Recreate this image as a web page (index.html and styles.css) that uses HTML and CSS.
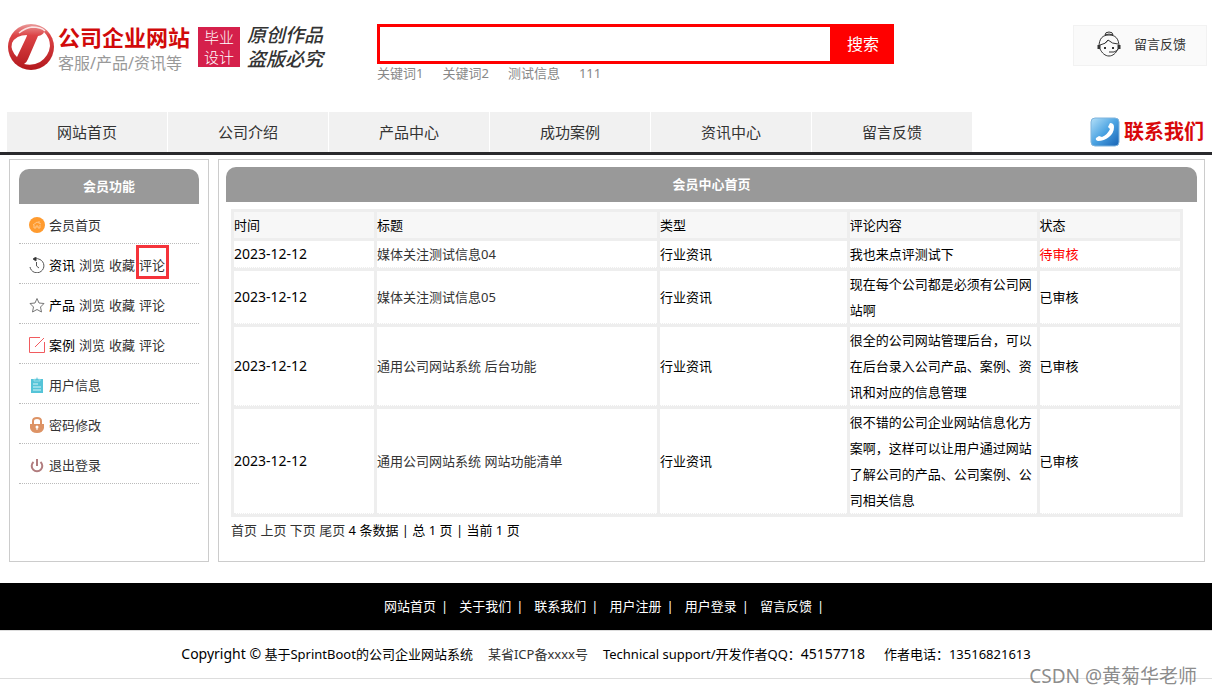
FILE: index.html
```html
<!DOCTYPE html>
<html lang="zh-CN">
<head>
<meta charset="utf-8">
<title>会员中心首页</title>
<link rel="stylesheet" href="styles.css">
</head>
<body>
<header class="header">
  <a class="logo" href="#">
    <svg class="logo-mark" viewBox="0 0 48 48" aria-hidden="true">
      <defs>
        <linearGradient id="disc" x1="0" y1="0" x2="0" y2="1"><stop offset="0" stop-color="#ea9a9a"/><stop offset=".25" stop-color="#dc4446"/><stop offset="1" stop-color="#b3181d"/></linearGradient>
      </defs>
      <circle cx="24" cy="24" r="23" fill="url(#disc)"/>
      <path d="M20 12Q9 12 5 20Q3 27 10 34L19 15Q20 13 20 12Z" fill="#fff"/>
      <path d="M31 13Q36 12 37 9Q43 15 43 23Q42 33 33 39Q26 43 17 41Q20 39 21 36Z" fill="#fff"/>
      <path d="M12 10Q18 5 25 4Q34 4 38 8" fill="none" stroke="#fff" stroke-width="1.500" opacity=".8"/>
    </svg>
    <span class="logo-text"><strong class="logo-name">公司企业网站</strong><span class="logo-sub">客服/产品/资讯等</span></span>
    <span class="badge">毕业设计</span>
    <span class="brush">原创作品<br>盗版必究</span>
  </a>
  <div class="search">
    <form class="search-form">
      <input class="search-input" type="text" aria-label="搜索内容">
      <button class="search-button" type="button">搜索</button>
    </form>
    <div class="keywords"><a href="#">关键词1</a><a href="#">关键词2</a><a href="#">测试信息</a><a href="#">111</a></div>
  </div>
  <a class="feedback" href="#">
    <svg class="agent" viewBox="0 0 24 26" fill="none" stroke="#333" aria-hidden="true">
      <path d="M8 4Q8 1 12 1T16 4M8 4Q12 2 16 4"/>
      <path d="M2 16C2 7 6 4 12 4S22 7 22 16M3 18C5 22 8 25 12 25S19 22 21 18"/>
      <path d="M3 14Q9 13 11 9Q15 13 21 13M11 9Q10 11 8 12M12 21H17Q20 20 22 17"/>
      <path d="M2 14V18M22 14V18" stroke-width="3"/>
      <path d="M8 16V18M16 16V18" stroke-width="2"/>
    </svg>
    留言反馈
  </a>
</header>
<nav class="nav">
  <a class="nav-item" href="#">网站首页</a>
  <a class="nav-item" href="#">公司介绍</a>
  <a class="nav-item" href="#">产品中心</a>
  <a class="nav-item" href="#">成功案例</a>
  <a class="nav-item" href="#">资讯中心</a>
  <a class="nav-item" href="#">留言反馈</a>
  <a class="contact" href="#">
    <svg class="phone" viewBox="0 0 30 30" aria-hidden="true">
      <defs><linearGradient id="blue" x1="0" y1="0" x2="1" y2="1"><stop offset="0" stop-color="#b4e0f8"/><stop offset=".5" stop-color="#4ba3e2"/><stop offset="1" stop-color="#1762b4"/></linearGradient></defs>
      <rect x="1" y="1" width="28" height="28" rx="4" fill="url(#blue)" stroke="#7fb4dd"/>
      <path d="M20 6Q24 6 24 10Q24 16 19 20Q14 24 8 24Q5 23 6 21L9 19L12 20Q18 17 20 12L18 10Z" fill="#fff"/>
    </svg>
    联系我们
  </a>
</nav>
<main class="content">
  <aside class="sidebar">
    <h2 class="title">会员功能</h2>
    <ul class="menu">
      <li class="menu-item">
        <svg class="icon" viewBox="0 0 16 16" aria-hidden="true"><circle cx="8" cy="8" r="8" fill="#ff9b2f"/><path d="M4 8L8 5L12 7M5 8V11H7V9H9V11H11V8M10 4V6" fill="none" stroke="#ffc688"/></svg>
        <a href="#">会员首页</a></li>
      <li class="menu-item">
        <svg class="icon" viewBox="0 0 16 16" fill="none" stroke="#555" aria-hidden="true"><path d="M5 2Q9 1 11 2.500A7 7 0 1 1 1 10M7.500 5V9L10 11"/><path d="M7 0L4 2L7 4Z" fill="#111"/></svg>
        <span>资讯</span><a href="#">浏览</a><a href="#">收藏</a><a class="marked" href="#">评论</a></li>
      <li class="menu-item">
        <svg class="icon" viewBox="0 0 16 16" fill="none" stroke="#777" stroke-linejoin="round" aria-hidden="true"><path d="M8 1.500L10 6L15 6.500L11.500 10L12.500 15L8 12.500L3.500 15L4.500 10L1 6.500L6 6Z"/></svg>
        <span>产品</span><a href="#">浏览</a><a href="#">收藏</a><a href="#">评论</a></li>
      <li class="menu-item">
        <svg class="icon" viewBox="0 0 16 16" fill="none" stroke="#f15b5f" aria-hidden="true"><path d="M11 .5H.5V15.500H15.500V5M6 10L15 1"/></svg>
        <span>案例</span><a href="#">浏览</a><a href="#">收藏</a><a href="#">评论</a></li>
      <li class="menu-item">
        <svg class="icon" viewBox="0 0 16 16" aria-hidden="true"><path d="M2 2H14V16H2Z" fill="#55c4d8"/><path d="M5 4V2H7Q8-1 9 2H11V4Z" fill="#55c4d8" stroke="#c5edf3" stroke-width=".6"/><path d="M4 7H9M4 10H12M4 13H12" stroke="#d8f5f8"/></svg>
        <a href="#">用户信息</a></li>
      <li class="menu-item">
        <svg class="icon" viewBox="0 0 16 16" aria-hidden="true"><path d="M4 8V4Q4 1 8 1T12 4V8" fill="none" stroke="#dd9365" stroke-width="2"/><path d="M1 7H15V11Q14 16 8 16T1 11Z" fill="#dd9365"/><path d="M8 13V10" stroke="#fff"/><circle cx="8" cy="10" r="1.500" fill="#fff"/></svg>
        <a href="#">密码修改</a></li>
      <li class="menu-item">
        <svg class="icon" viewBox="0 0 16 16" fill="none" stroke="#b17c7e" stroke-width="2" aria-hidden="true"><path d="M4.500 5A5.300 5.300 0 1 0 11.500 5M8 2V9"/></svg>
        <a href="#">退出登录</a></li>
    </ul>
  </aside>
  <section class="panel">
    <h1 class="title">会员中心首页</h1>
    <table class="comments">
      <colgroup><col class="c15"><col class="c30"><col class="c20"><col class="c20"><col class="c15"></colgroup>
      <thead><tr><th>时间</th><th>标题</th><th>类型</th><th>评论内容</th><th>状态</th></tr></thead>
      <tbody>
        <tr><td class="date">2023-12-12</td><td><a href="#">媒体关注测试信息04</a></td><td>行业资讯</td><td>我也来点评测试下</td><td class="pending">待审核</td></tr>
        <tr><td class="date">2023-12-12</td><td><a href="#">媒体关注测试信息05</a></td><td>行业资讯</td><td>现在每个公司都是必须有公司网站啊</td><td>已审核</td></tr>
        <tr><td class="date">2023-12-12</td><td><a href="#">通用公司网站系统 后台功能</a></td><td>行业资讯</td><td>很全的公司网站管理后台，可以在后台录入公司产品、案例、资讯和对应的信息管理</td><td>已审核</td></tr>
        <tr><td class="date">2023-12-12</td><td><a href="#">通用公司网站系统 网站功能清单</a></td><td>行业资讯</td><td>很不错的公司企业网站信息化方案啊，这样可以让用户通过网站了解公司的产品、公司案例、公司相关信息</td><td>已审核</td></tr>
      </tbody>
    </table>
    <div class="pager"><a href="#">首页</a> <a href="#">上页</a> <a href="#">下页</a> <a href="#">尾页</a> 4 条数据 | 总 1 页 | 当前 1 页</div>
  </section>
</main>
<footer>
  <div class="footer-links">
    <span><a href="#">网站首页</a>|</span><span><a href="#">关于我们</a>|</span><span><a href="#">联系我们</a>|</span><span><a href="#">用户注册</a>|</span><span><a href="#">用户登录</a>|</span><span><a href="#">留言反馈</a>|</span>
  </div>
  <div class="copyright">
    <span><span class="latin">Copyright ©</span> 基于SprintBoot的公司企业网站系统</span>
    <a href="#">某省ICP备xxxx号</a>
    <span>Technical support/开发作者QQ：<span class="latin">45157718</span></span>
    <span class="tel">作者电话：13516821613</span>
  </div>
</footer>
<div class="watermark">CSDN @黄菊华老师</div>
</body>
</html>
```
FILE: styles.css
```css
* { box-sizing: border-box; }
body {
  margin: 0;
  position: relative;
  background: #fff;
  color: #000;
  font: 13px/26px "Noto Sans", "Noto Sans CJK SC", sans-serif;
}
a { color: #333; text-decoration: none; }

.header { display: flex; align-items: flex-start; height: 112px; padding: 23px 5px 0 7px; }
.logo { display: flex; width: 370px; flex: none; }
.logo-mark { width: 48px; height: 48px; margin-right: 3px; }
.logo-text { display: flex; flex-direction: column; width: 132px; white-space: nowrap; }
.logo-name { color: #d10a0a; font-size: 22px; line-height: 28px; }
.logo-sub { color: #999; font-size: 16px; line-height: 24px; }
.badge {
  width: 42px; height: 40px; margin: 4px 7px 0 8px; padding: 0 6px;
  background: #d5204b; color: #fff; font-size: 15px; line-height: 20px; font-weight: 300;
}
.brush { color: #333; font-size: 19px; line-height: 24px; font-style: italic; font-weight: 500; }

.search { width: 517px; margin-top: 1px; }
.search-form { display: flex; height: 40px; }
.search-input { flex: 1; min-width: 0; border: 3px solid #f00; border-right: 0; padding: 0 8px; outline: 0; background: #fff; font: inherit; }
.search-button { width: 64px; border: 0; padding: 0 0 0 2px; background: #f00; color: #fff; font: inherit; font-size: 16px; }
.keywords { display: flex; gap: 19px; line-height: 18px; }
.keywords a { color: #888; }

.feedback {
  display: flex; align-items: center; gap: 13px; margin: 2px 0 0 auto;
  height: 41px; padding: 0 20px 4px 23px;
  border: 1px solid #f2f2f2; background: #fafafa;
}
.agent { width: 24px; height: 26px; }

.nav { display: flex; gap: 1px; height: 43px; padding: 0 8px 0 7px; border-bottom: 3px solid #29292c; }
.nav-item { flex: 0 1 160px; background: #f1f1f1; font-size: 15px; line-height: 40px; text-align: center; }
.contact { display: flex; align-items: center; gap: 4px; margin-left: auto; color: #d8080b; font-size: 20px; font-weight: 700; }
.phone { width: 30px; height: 30px; }

.content { display: flex; gap: 9px; margin: 4px 7px 21px 9px; min-height: 403px; }
.sidebar { flex: none; width: 200px; padding: 9px; border: 1px solid #ccc; }
.panel { flex: 1; padding: 7px; border: 1px solid #ccc; }
.title { margin: 0; height: 35px; border-radius: 10px 10px 0 0; background: #999; color: #fff; font-size: 13px; line-height: 35px; text-align: center; }
.menu { margin: 0; padding: 0; list-style: none; }
.menu-item { display: flex; align-items: center; gap: 4px; height: 40px; padding: 2px 0 0 10px; border-bottom: 1px dotted #bbb; }
.icon { width: 16px; height: 16px; flex: none; }
.marked { position: relative; }
.marked::after { content: ""; position: absolute; inset: -7px -4px -1px -3px; border: 3px solid #f5333a; }

.comments { width: 98%; margin: 7px 0 0 5px; table-layout: fixed; border-spacing: 3px; background: #eee; }
.comments th { padding: 0; background: #f7f7f7; font-weight: 400; text-align: left; }
.comments td { padding: 0; background: #fff; border-bottom: 1px dotted #eee; }
.c15 { width: 15%; }
.c20 { width: 20%; }
.c30 { width: 30%; }
.comments .date { font-size: 14px; }
.comments .pending { color: #f00; }
.pager { margin-left: 5px; }

.footer-links { display: flex; justify-content: center; gap: 11px; padding-right: 4px; background: #000; color: #fff; line-height: 47px; }
.footer-links a { color: #fff; margin-right: 5px; }
.copyright { display: flex; justify-content: center; gap: 15px; border: 1px solid #ddd; border-width: 1px 0; line-height: 47px; margin-bottom: 16px; }
.latin { font-size: 14px; line-height: 26px; }
.tel { margin-left: 4px; }
.watermark { position: absolute; right: 15px; bottom: 4px; color: rgba(110, 110, 110, .8); font-size: 19px; line-height: 30px; }
```
